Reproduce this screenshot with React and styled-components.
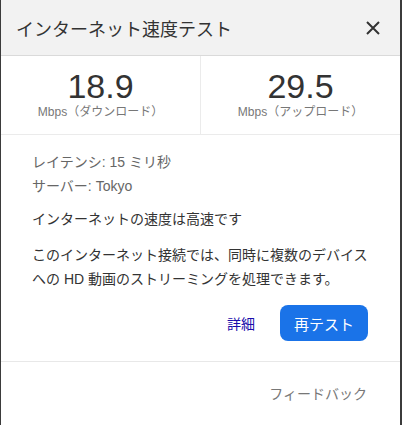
import React from "react";
import styled, { createGlobalStyle } from "styled-components";

const Global = createGlobalStyle`
  html, body { margin: 0; padding: 0; background: #3b3b3b; }
  body { font-family: Arial, "Liberation Sans", "Noto Sans CJK JP", sans-serif; }
  #root { height: 425px; overflow: hidden; }
`;

const Page = styled.div`
  display: flex;
  height: 425px;
  padding-left: 1px;
`;

const Dialog = styled.div`
  width: 399px;
  background: #fff;
  display: flex;
  flex-direction: column;
`;

const Header = styled.div`
  height: 56px;
  background: #f2f2f2;
  border-bottom: 1px solid #dadada;
  display: flex;
  align-items: center;
  justify-content: space-between;
  padding: 0 19px 0 15px;
  box-sizing: border-box;
`;

const Title = styled.div`
  font-size: 18px;
  color: #333;
`;

const Close = styled.button`
  border: 0;
  background: none;
  padding: 0;
  width: 16px;
  height: 16px;
  display: flex;
  align-items: center;
  justify-content: center;
`;

const Stats = styled.div`
  display: flex;
  height: 79px;
  border-bottom: 1px solid #ebebeb;
  box-sizing: border-box;
`;

const Stat = styled.div`
  flex: 1;
  display: flex;
  flex-direction: column;
  align-items: center;
  padding-top: 12px;
  & + & { border-left: 1px solid #ebebeb; }
`;

const Value = styled.div`
  font-size: 34px;
  line-height: 36px;
  color: #333;
`;

const Unit = styled.div`
  font-size: 12px;
  line-height: 16px;
  color: #777;
`;

const Body = styled.div`
  padding: 15px 32px 0 31px;
  font-size: 14px;
  color: #333;
`;

const Meta = styled.div`
  color: #666;
  line-height: 24px;
  margin-bottom: 9px;
`;

const Para = styled.p`
  margin: 0 0 12px;
  line-height: 24px;
`;

const Actions = styled.div`
  display: flex;
  justify-content: flex-end;
  align-items: center;
  gap: 25px;
  padding: 2px 0 20px;
`;

const Link = styled.a`
  color: #1a0dab;
  font-size: 14px;
  text-decoration: none;
`;

const Primary = styled.button`
  width: 88px;
  height: 36px;
  border: 0;
  border-radius: 8px;
  background: #1a73e8;
  color: #fff;
  font-family: inherit;
  font-size: 15px;
`;

const Footer = styled.div`
  border-top: 1px solid #e8e8e8;
  display: flex;
  justify-content: flex-end;
  padding: 21px 33px 0 0;
  font-size: 14px;
  color: #777;
`;

export default function App() {
  return (
    <>
      <Global />
      <Page>
        <Dialog>
          <Header>
            <Title>インターネット速度テスト</Title>
            <Close aria-label="閉じる">
              <svg width="14" height="14" viewBox="0 0 14 14">
                <path d="M1 1L13 13M13 1L1 13" stroke="#333" strokeWidth="2" />
              </svg>
            </Close>
          </Header>
          <Stats>
            <Stat>
              <Value>18.9</Value>
              <Unit>Mbps（ダウンロード）</Unit>
            </Stat>
            <Stat>
              <Value>29.5</Value>
              <Unit>Mbps（アップロード）</Unit>
            </Stat>
          </Stats>
          <Body>
            <Meta>
              <div>レイテンシ: 15 ミリ秒</div>
              <div>サーバー: Tokyo</div>
            </Meta>
            <Para>インターネットの速度は高速です</Para>
            <Para>
              このインターネット接続では、同時に複数のデバイスへの HD 動画のストリーミングを処理できます。
            </Para>
            <Actions>
              <Link href="#">詳細</Link>
              <Primary>再テスト</Primary>
            </Actions>
          </Body>
          <Footer>フィードバック</Footer>
        </Dialog>
      </Page>
    </>
  );
}
